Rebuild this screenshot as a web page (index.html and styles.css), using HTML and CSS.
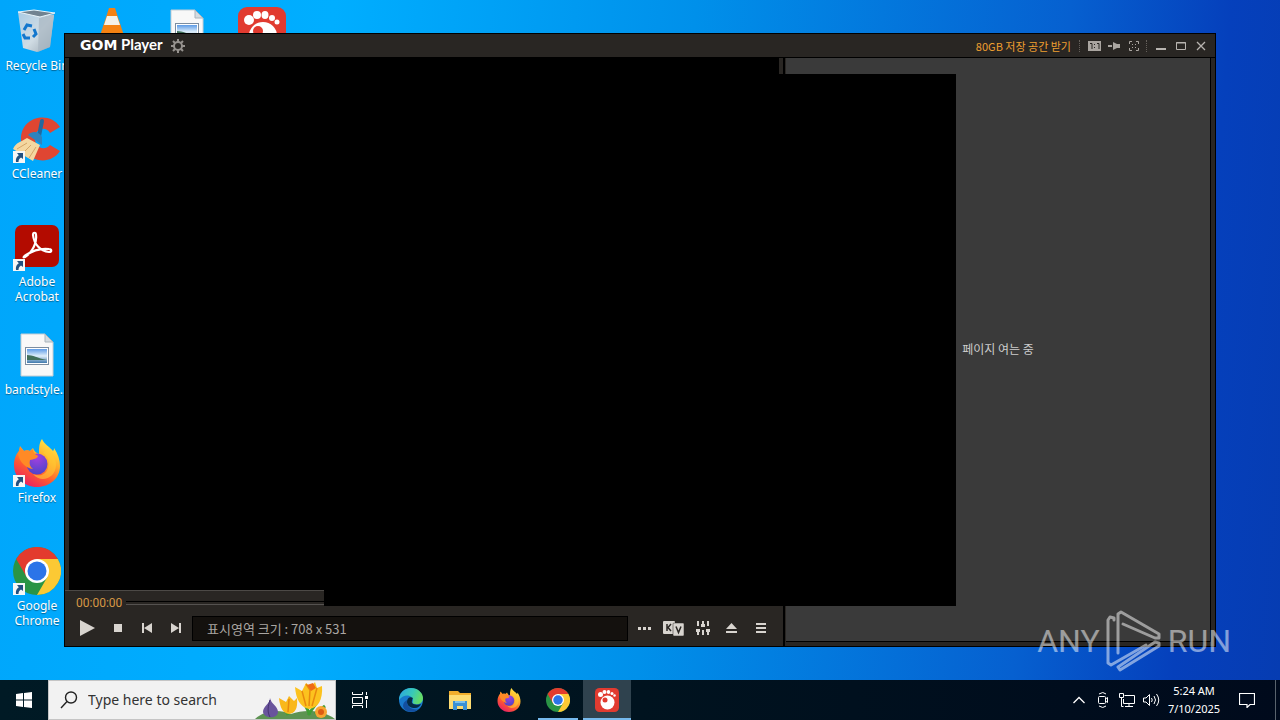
FILE: index.html
```html
<!doctype html>
<html lang="en">
<head>
    <meta charset="UTF-8">
    <meta name="viewport" content="width=device-width, initial-scale=1.0">
    <title>GOM Player</title>
    <link rel="stylesheet" href="styles.css">
</head>
<body>
<!-- shared icons -->
<svg class="sprite" aria-hidden="true">
    <defs>
        <linearGradient id="foxBody" x1="0.8" y1="0" x2="0.2" y2="1">
            <stop offset="0" stop-color="#fff14a"/>
            <stop offset="0.35" stop-color="#ffb02b"/>
            <stop offset="0.65" stop-color="#ff5a30"/>
            <stop offset="1" stop-color="#e3186c"/>
        </linearGradient>
        <radialGradient id="foxGlobe" cx="0.5" cy="0.2" r="0.8">
            <stop offset="0" stop-color="#a43fe0"/>
            <stop offset="1" stop-color="#4c45c8"/>
        </radialGradient>
        <linearGradient id="sky" x1="0" y1="0" x2="0" y2="1">
            <stop offset="0" stop-color="#5d9be6"/>
            <stop offset="0.5" stop-color="#e0effa"/>
            <stop offset="1" stop-color="#3f78ac"/>
        </linearGradient>
        <linearGradient id="bin" x1="0" y1="0" x2="1" y2="1">
            <stop offset="0" stop-color="#a9cbe4"/>
            <stop offset="0.55" stop-color="#d0dce4"/>
            <stop offset="1" stop-color="#98a5b0"/>
        </linearGradient>
        <linearGradient id="edgeTop" x1="0" y1="0" x2="1" y2="0.3">
            <stop offset="0" stop-color="#2aa4e4"/>
            <stop offset="0.6" stop-color="#38c9b8"/>
            <stop offset="1" stop-color="#64dc68"/>
        </linearGradient>
    </defs>
    <symbol id="i-chrome" viewBox="0 0 48 48">
        <circle cx="24" cy="24" r="24" fill="#2a9445"/>
        <path d="M24 24V12H44.800A24 24 0 0 1 24 48L34.400 30Z" fill="#fcc934"/>
        <path d="M13.600 30 3.200 12A24 24 0 0 1 44.800 12H24Z" fill="#e33b2e"/>
        <circle cx="24" cy="24" r="12" fill="#fff"/>
        <circle cx="24" cy="24" r="9.500" fill="#2b74e8"/>
    </symbol>
    <symbol id="i-firefox" viewBox="0 0 48 48">
        <path d="M29 0c2 5 8 8 11 12 1-1 1-2 1-3 4 6 6 12 6 18 0 12-10 21-23 21S1 38 1 26C1 20 3 15 6 12l1-5 4 5c2-1 4-1 6 0l3-3c1 3 3 5 6 6 0-6 0-11 3-15z" fill="url(#foxBody)"/>
        <circle cx="24" cy="25" r="10.500" fill="url(#foxGlobe)"/>
        <path d="M5 15l2-7 4 4c2-1 4-1 6 0l3-2c0 4 2 5 5 7-1 3-4 3-8 4-1 4 0 7 3 9-7-1-13-6-15-15z" fill="#ff8a26"/>
        <path d="M30 14c5 3 7 8 5 15-2 7-9 9-15 6 8 10 23 4 23-9 0-8-5-11-7-18z" fill="#ffcb34" opacity="0.600"/>
    </symbol>
    <symbol id="i-gom" viewBox="0 0 48 48">
        <rect width="48" height="48" rx="9" fill="#e13b30"/>
        <ellipse cx="11" cy="13" rx="5" ry="5" fill="#fff"/>
        <ellipse cx="19" cy="8" rx="4" ry="4" fill="#fff"/>
        <ellipse cx="27" cy="8" rx="3.500" ry="4" fill="#fff"/>
        <ellipse cx="34" cy="11" rx="3" ry="3" fill="#fff"/>
        <ellipse cx="39" cy="15" rx="2.500" ry="2.500" fill="#fff"/>
        <ellipse cx="25" cy="29" rx="14" ry="14" fill="#fff"/>
        <circle cx="20" cy="24" r="5" fill="#e13b30"/>
    </symbol>
    <symbol id="i-picture" viewBox="0 0 48 48">
        <path d="M8 3H32L40 11V45H8Z" fill="#f8f8f8" stroke="#c4cdd4"/>
        <path d="M32 3V11H40Z" fill="#d4dbe0" stroke="#aab4bc"/>
        <rect x="12.500" y="16.500" width="23" height="17" fill="#fff" stroke="#7c8da0"/>
        <rect x="14" y="18" width="20" height="14" fill="url(#sky)"/>
        <path d="M14 24c6 0 10 3 20 5H14z" fill="#42705a"/>
    </symbol>
    <symbol id="i-shortcut" viewBox="0 0 12 12">
        <rect width="12" height="12" fill="#f6f6f6"/>
        <path d="M4 2H10V8L8 6.500C6 8 5.500 9 5.500 11H3C2.500 8 3.500 6 5.800 4.300Z" fill="#23507f"/>
    </symbol>
</svg>

<main class="desktop">
    <nav class="shortcuts">
        <div class="column">
            <a href="#" class="shortcut">
                <span class="picture">
                    <svg viewBox="0 0 48 48">
                        <path d="M5 5 41 8 37 40 24 45 10 41Z" fill="url(#bin)"/>
                        <path d="M26 11 41 7 37 40 25 45Z" fill="#a7b5c1" opacity="0.700"/>
                        <path d="M5 5 21 3 42 6 27 10Z" fill="#718391" stroke="#e8f3f9"/>
                        <g fill="none" stroke="#1377cd" stroke-width="3">
                            <path d="M11 23l3-5 5 1"/>
                            <path d="M21 22l2 5-3 3"/>
                            <path d="M17 31h-5l-2-4"/>
                        </g>
                    </svg>
                </span>
                <span>Recycle Bin</span>
            </a>
            <a href="#" class="shortcut">
                <span class="picture">
                    <svg viewBox="0 0 48 48">
                        <path d="M47 12 37 18C33 11 23 13 22 22c-1 10 9 15 15 8l10 6C36 53 8 46 8 23 9 1 37-4 47 12z" fill="#df4632"/>
                        <path d="M29 6 26 21" stroke="#22699f" stroke-width="4" stroke-linecap="round"/>
                        <path d="M15 20c5-5 11-3 14 2v8z" fill="#2e83bd"/>
                        <path d="M14 23 27 30 20 46 0 34C3 27 8 27 14 23z" fill="#f4d7a0"/>
                        <path d="M4 34 14 28M10 38 18 30M16 43 23 32" stroke="#d4a667" fill="none"/>
                    </svg>
                    <svg class="arrow"><use href="#i-shortcut"/></svg>
                </span>
                <span>CCleaner</span>
            </a>
            <a href="#" class="shortcut">
                <span class="picture">
                    <svg viewBox="0 0 48 48">
                        <rect x="2" y="2" width="44" height="42" rx="7" fill="#b30b00"/>
                        <path d="M12 34c8-5 12-15 11-22 0-3-3-3-3 0 1 9 7 16 16 17 3 0 3-3 0-3-9-1-17 2-23 6-3 2-3 3-1 2z" fill="none" stroke="#fff" stroke-width="2.200"/>
                    </svg>
                    <svg class="arrow"><use href="#i-shortcut"/></svg>
                </span>
                <span>Adobe Acrobat</span>
            </a>
            <a href="#" class="shortcut">
                <span class="picture"><svg><use href="#i-picture"/></svg></span>
                <span>bandstyle...</span>
            </a>
            <a href="#" class="shortcut">
                <span class="picture">
                    <svg><use href="#i-firefox"/></svg>
                    <svg class="arrow"><use href="#i-shortcut"/></svg>
                </span>
                <span>Firefox</span>
            </a>
            <a href="#" class="shortcut">
                <span class="picture">
                    <svg><use href="#i-chrome"/></svg>
                    <svg class="arrow"><use href="#i-shortcut"/></svg>
                </span>
                <span>Google Chrome</span>
            </a>
        </div>
        <div class="column">
            <a href="#" class="shortcut" aria-label="VLC">
                <span class="picture">
                    <svg viewBox="0 0 48 48">
                        <path d="M21 1h6l14 43H7z" fill="#f58212"/>
                        <path d="M19 9h10l3 9H16zM13 26h22l3 9H10z" fill="#f4f1e8"/>
                    </svg>
                </span>
            </a>
        </div>
        <div class="column">
            <a href="#" class="shortcut" aria-label="Picture">
                <span class="picture"><svg><use href="#i-picture"/></svg></span>
            </a>
        </div>
        <div class="column">
            <a href="#" class="shortcut" aria-label="GOM Player">
                <span class="picture"><svg><use href="#i-gom"/></svg></span>
            </a>
        </div>
    </nav>

    <section class="player">
        <header class="titlebar">
            <h1><span class="gom">GOM</span> Player</h1>
            <button type="button" aria-label="Settings">
                <svg width="14" height="14" viewBox="0 0 14 14" fill="none" stroke="#96928e">
                    <circle cx="7" cy="7" r="4" stroke-width="2"/>
                    <path d="M7 0v3M7 11v3M0 7h3M11 7h3M2 2l2 2M10 10l2 2M2 12l2-2M10 4l2-2" stroke-width="2"/>
                </svg>
            </button>
            <a href="#" class="promo">80GB 저장 공간 받기</a>
            <div class="group">
                <button type="button" aria-label="Original size">
                    <svg width="13" height="10" viewBox="0 0 13 10">
                        <rect width="13" height="10" fill="#aaa5a0"/>
                        <path d="M2 2.500h2V8M9 2.500h2V8M6.500 3v1M6.500 6v1" stroke="#292623" fill="none"/>
                    </svg>
                </button>
                <button type="button" aria-label="Always on top">
                    <svg width="13" height="10" viewBox="0 0 13 10" fill="#aaa5a0">
                        <path d="M0 4h4v2H0zM5 1l4 2h3v4H9L5 9z"/>
                    </svg>
                </button>
                <button type="button" aria-label="Full screen">
                    <svg width="10" height="10" viewBox="0 0 10 10" fill="none" stroke="#aaa5a0">
                        <path d="M.5 3V.5H3M7 .5h2.500V3M9.500 7v2.500H7M3 9.500H.5V7M3 3l1 1M7 3 6 4M3 7l1-1M7 7 6 6"/>
                    </svg>
                </button>
            </div>
            <div class="group">
                <button type="button" aria-label="Minimize">
                    <svg width="10" height="10" viewBox="0 0 10 10"><path d="M0 8h10" stroke="#b8b4b0" stroke-width="2"/></svg>
                </button>
                <button type="button" aria-label="Maximize">
                    <svg width="10" height="10" viewBox="0 0 10 10" fill="none" stroke="#b8b4b0"><path d="M.5 1.500h9v7h-9zM0 2h10"/></svg>
                </button>
                <button type="button" aria-label="Close">
                    <svg width="10" height="10" viewBox="0 0 10 10" stroke="#b8b4b0" stroke-width="1.300"><path d="M1 1l8 8M9 1 1 9"/></svg>
                </button>
            </div>
        </header>

        <div class="content">
            <div class="left">
                <div class="video"></div>
                <div class="seek">
                    <time>00:00:00</time>
                    <input type="range" min="0" max="100" value="0" aria-label="Position">
                </div>
                <div class="controls">
                    <button type="button" class="play" aria-label="Play">
                        <svg width="15" height="16" viewBox="0 0 15 16"><path d="M0 0 15 8 0 16Z"/></svg>
                    </button>
                    <button type="button" aria-label="Stop">
                        <svg width="8" height="8" viewBox="0 0 8 8"><path d="M0 0h8v8H0z"/></svg>
                    </button>
                    <button type="button" aria-label="Previous">
                        <svg width="10" height="10" viewBox="0 0 10 10"><path d="M0 0h2v10H0zM10 0v10L2 5z"/></svg>
                    </button>
                    <button type="button" aria-label="Next">
                        <svg width="10" height="10" viewBox="0 0 10 10"><path d="M8 0h2v10H8zM0 0v10l8-5z"/></svg>
                    </button>
                    <output>표시영역 크기 : 708 x 531</output>
                    <div class="extras">
                        <button type="button" aria-label="More">
                            <svg width="13" height="3" viewBox="0 0 13 3"><path d="M0 0h3v3H0zM5 0h3v3H5zM10 0h3v3h-3z"/></svg>
                        </button>
                        <button type="button" aria-label="Subtitles">
                            <svg width="21" height="16" viewBox="0 0 21 16">
                                <rect y="1" width="12" height="13" rx="1"/>
                                <rect x="10" y="3" width="11" height="13" rx="1" stroke="#292623" stroke-width=".5"/>
                                <path d="M4 4v7M8 4 5 7.500 8 11M13 6.500l2.500 6L18 6.500" fill="none" stroke="#292623" stroke-width="1.500"/>
                            </svg>
                        </button>
                        <button type="button" aria-label="Control panel">
                            <svg width="14" height="14" viewBox="0 0 14 14">
                                <path d="M1 0h2v5H1zM0 8h4v3H3v3H1v-3H0zM6 0h2v3h1v3H5V3h1zM6 9h2v5H6zM11 0h2v5h-2zM10 8h4v3h-1v3h-2v-3h-1z"/>
                            </svg>
                        </button>
                        <button type="button" aria-label="Open">
                            <svg width="11" height="10" viewBox="0 0 11 10"><path d="M5.500 0 11 6H0zM0 8h11v2H0z"/></svg>
                        </button>
                        <button type="button" aria-label="Playlist">
                            <svg width="10" height="10" viewBox="0 0 10 10"><path d="M0 0h10v2H0zM0 4h10v2H0zM0 8h10v2H0z"/></svg>
                        </button>
                    </div>
                </div>
            </div>
            <aside class="side">페이지 여는 중</aside>
        </div>
        <div class="surface"></div>
    </section>

    <div class="watermark">
        <span>ANY</span>
        <svg width="56" height="62" viewBox="0 0 56 62" fill="none" stroke="#fff" stroke-width="3" stroke-linejoin="round" stroke-linecap="round">
            <path d="M8 10V8L4 7 2 10V53L5 55 40 35"/>
            <path d="M12 43V4L15 2 53 24V28L49 28 17 14"/>
            <path d="M12 57 14 60 53 36V33L49 32 12 57"/>
        </svg>
        <span>RUN</span>
    </div>
</main>

<footer class="taskbar">
    <button type="button" class="task" aria-label="Start">
        <svg width="16" height="16" viewBox="0 0 16 16" fill="#fff"><path d="M0 2 7 1v6.500H0zM8 1l8-1v7.500H8zM0 8.500h7V15l-7-1zM8 8.500h8V16l-8-1z"/></svg>
    </button>
    <label class="search">
        <svg width="18" height="18" viewBox="0 0 18 18" fill="none" stroke="#222" stroke-width="1.400"><circle cx="11" cy="6.500" r="5.500"/><path d="M7 10.500 1 17"/></svg>
        <input type="text" placeholder="Type here to search" aria-label="Search">
        <svg class="flowers" width="80" height="38" viewBox="0 0 80 38">
            <path d="M0 38c10-9 24-10 36-5 14-5 32-4 44 5z" fill="#5d9352"/>
            <path d="M33 34 28 21M55 34 47 17M53 34l10-14M60 33l10-8" stroke="#3f9d35" stroke-width="3" fill="none"/>
            <path d="M15 17c1 6 8 8 8 14 0 7-14 7-15 0 0-6 7-8 7-14z" fill="#69549c"/>
            <path d="M15 19c-2 6-3 12 0 17" stroke="#453273" fill="none"/>
            <path d="M24 17l7 4 3-6 5 5 3-3c1 11-2 15-8 16-6-1-9-6-10-16z" fill="#f9b81b"/>
            <path d="M40 6l7 4 4-8 5 4 4-5 2 6 5-2c1 14-4 22-13 23-9-2-13-10-14-22z" fill="#fcc21e"/>
            <path d="M51 3l4 6-1 16M47 10l4 15M62 7l-5 18M34 18l-1 13" stroke="#e8890e" stroke-width="1.500" fill="none"/>
            <path d="M52 4l6-2 3 5-5 3z" fill="#ef6b14"/>
            <circle cx="66" cy="31" r="6" fill="#f8a531"/>
            <circle cx="66" cy="31" r="3" fill="#dd5c14"/>
        </svg>
    </label>
    <button type="button" class="task" aria-label="Task View">
        <svg width="17" height="16" viewBox="0 0 17 16" fill="none" stroke="#fff"><path d="M.5 0v2.500h10V0M.5 5.500h10v6H.5zM.5 16v-2.500h10V16M14.500 0v3M14.500 8v8"/><path d="M13 4h3v3h-3z" fill="#fff" stroke="none"/></svg>
    </button>
    <div class="apps">
        <button type="button" class="task" aria-label="Edge">
            <svg width="24" height="24" viewBox="0 0 24 24">
                <circle cx="12" cy="12" r="12" fill="#1879cc"/>
                <path d="M0 12C0 5 5 0 12 0s12 5 12 10c0 5-4 7-8 6-2 0-3-1-2-3 1-5-8-9-14-1z" fill="url(#edgeTop)"/>
                <path d="M8 14c0-4 3-6 6-4-1 1-1 3-1 3-1 2 2 5 9 3-1 2-3 4-6 4-4 0-8-2-8-6z" fill="#052a44"/>
                <path d="M8 12c-1 7 6 11 12 9-6 5-15 3-16-3 0-3 2-5 4-6z" fill="#134f9f"/>
            </svg>
        </button>
        <button type="button" class="task" aria-label="File Explorer">
            <svg width="22" height="20" viewBox="0 0 22 20">
                <path d="M0 1h9l2 2h11v16H0z" fill="#f1ae2c"/>
                <path d="M0 5h22v14H0z" fill="#fddc72"/>
                <path d="M4 11h14v9h-4v-4H8v4H4z" fill="#3b91d4"/>
                <path d="M6 11h10v2H6z" fill="#7dc2ed"/>
            </svg>
        </button>
        <button type="button" class="task" aria-label="Firefox"><svg width="24" height="24"><use href="#i-firefox"/></svg></button>
        <button type="button" class="task running" aria-label="Chrome"><svg width="24" height="24"><use href="#i-chrome"/></svg></button>
        <button type="button" class="task active" aria-label="GOM Player"><svg width="24" height="24"><use href="#i-gom"/></svg></button>
    </div>
    <div class="tray">
        <button type="button" aria-label="Show hidden icons">
            <svg width="12" height="8" viewBox="0 0 12 8" fill="none" stroke="#fff" stroke-width="1.300"><path d="M.5 7 6 1.500 11.500 7"/></svg>
        </button>
        <button type="button" aria-label="Meet Now">
            <svg width="12" height="16" viewBox="0 0 12 16" fill="none" stroke="#fff"><rect x="1.500" y="4.500" width="7" height="7" rx="1"/><path d="M8.500 7l2-1.500v5l-2-1.500M2 2q4-3 7 0M2 14q4 3 7 0"/></svg>
        </button>
        <button type="button" aria-label="Network">
            <svg width="16" height="14" viewBox="0 0 16 14" fill="none" stroke="#fff"><path d="M5.500 2.500h10v8h-11V6M10 10.500v3M6 13.500h8M.5.5h4v4h-4zM2.500 4.500v9h2"/></svg>
        </button>
        <button type="button" aria-label="Volume">
            <svg width="17" height="14" viewBox="0 0 17 14" fill="none" stroke="#fff"><path d="M.5 5h2.500L6.500 1.500v11L3 9H.5zM8.500 5q1.500 2 0 4M11 3q3 4 0 8M13.500 1q4.500 6 0 12"/></svg>
        </button>
    </div>
    <time class="clock">5:24 AM<br>7/10/2025</time>
    <button type="button" class="notes" aria-label="Notifications">
        <svg width="16" height="16" viewBox="0 0 16 16" fill="none" stroke="#fff" stroke-width="1.200"><path d="M.5 1.500h15v11H11L8 15.500V12.500H.5z"/></svg>
    </button>
    <button type="button" class="peek" aria-label="Show desktop"></button>
</footer>
</body>
</html>
```
FILE: styles.css
```css
* {
    box-sizing: border-box;
}

body {
    margin: 0;
    height: 100vh;
    display: grid;
    grid-template-rows: 1fr 40px;
    overflow: hidden;
    font-family: "Noto Sans", "Noto Sans CJK KR", sans-serif;
    font-size: 12px;
    color: #fff;
}

button {
    display: flex;
    align-items: center;
    justify-content: center;
    padding: 0;
    border: 0;
    background: none;
    color: inherit;
}

.sprite {
    position: absolute;
    width: 0;
    height: 0;
}

/* desktop */
.desktop {
    position: relative;
    min-height: 0;
    background: linear-gradient(95deg, #00a6fb 0%, #00aeff 25%, #0090ea 52%, #0660d0 80%, #0540bc 92%, #063cb2 100%);
}

.shortcuts {
    display: flex;
    height: 100%;
}

.column {
    width: 75px;
    padding-top: 7px;
}

.shortcut {
    display: flex;
    flex-direction: column;
    align-items: center;
    gap: 3px;
    height: 108px;
    padding: 0 3px 0 2px;
    line-height: 15px;
    text-align: center;
    color: #fff;
    text-decoration: none;
    text-shadow: 0 1px 1px rgba(0, 0, 0, 0.4);
}

.picture {
    position: relative;
    flex: none;
    width: 48px;
    height: 48px;
}

.picture svg {
    width: 48px;
    height: 48px;
}

.picture .arrow {
    position: absolute;
    left: 0;
    bottom: 0;
    width: 12px;
    height: 12px;
}

/* player window */
.player {
    position: absolute;
    inset: 33px 64px 33px 64px;
    display: flex;
    flex-direction: column;
    border: 1px solid #000;
    background: #292623;
}

.titlebar {
    display: flex;
    align-items: center;
    height: 24px;
    padding: 0 2px 0 15px;
    border-bottom: 1px solid #000;
}

.titlebar h1 {
    margin: 0 8px 2px 0;
    font: bold 15px/20px Lato, sans-serif;
}

.titlebar .gom {
    font-family: "DejaVu Sans", sans-serif;
    font-size: 14px;
}

.promo {
    margin-left: auto;
    margin-right: 8px;
    font: 11px/20px "Noto Sans CJK KR", sans-serif;
    color: #f0a030;
    text-decoration: none;
}

.group {
    display: flex;
    border-left: 1px dotted #65605b;
    padding: 0 2px 0 4px;
}

.group button {
    width: 20px;
    height: 12px;
}

.content {
    flex: 1;
    display: flex;
    min-height: 0;
}

.left {
    flex: 1;
    display: flex;
    flex-direction: column;
    border-right: 2px solid #000;
}

.video {
    flex: 1;
    margin: 0 4px;
    background: #000;
}

.seek {
    display: flex;
    align-items: center;
    gap: 4px;
    height: 24px;
    padding: 0 11px;
    border-top: 1px solid #4c4946;
}

.seek time {
    font: 12px/16px Roboto, sans-serif;
    color: #d69745;
}

.seek input {
    flex: 1;
    height: 4px;
    margin: 0;
    appearance: none;
    border-top: 1px solid #000;
    border-bottom: 1px solid #555250;
    background: #292623;
}

.seek input::-webkit-slider-thumb {
    appearance: none;
    width: 0;
    height: 0;
}

.controls {
    display: flex;
    align-items: center;
    height: 32px;
    padding: 0 8px 4px 6px;
}

.controls button {
    width: 29px;
    height: 24px;
}

.controls .play {
    width: 32px;
}

.controls svg {
    fill: #d8d4cf;
}

.controls output {
    flex: 1;
    height: 25px;
    margin: 0 2px;
    padding-left: 14px;
    border: 1px solid #000;
    background: #14110e;
    font: 13px/23px "Noto Sans CJK KR", sans-serif;
    color: #aaa6a2;
}

.extras {
    display: flex;
}

.side {
    display: flex;
    align-items: center;
    justify-content: center;
    width: 425px;
    margin: 0 4px 4px 1px;
    padding-bottom: 2px;
    border: solid #000;
    border-width: 0 1px 1px 0;
    background: #3a3a3a;
    font-family: "Noto Sans CJK KR", sans-serif;
    color: #ccc;
}

/* video surface drawn over both panes */
.surface {
    position: absolute;
    inset: 40px 259px;
    background: #000;
}

.watermark {
    position: absolute;
    right: 49px;
    bottom: 8px;
    display: flex;
    align-items: center;
    gap: 6px;
    opacity: 0.5;
    font: 32px/40px Roboto, sans-serif;
}

/* taskbar */
.taskbar {
    display: flex;
    align-items: stretch;
    background: linear-gradient(90deg, #001a25, #00131f 50%, #000a1c);
}

.task {
    width: 48px;
}

.search {
    display: flex;
    align-items: center;
    width: 288px;
    padding-left: 11px;
    border: 1px solid #c5c5c5;
    background: #f2f2f2;
}

.search input {
    flex: 1;
    min-width: 0;
    padding: 0 0 0 10px;
    border: 0;
    outline: 0;
    background: none;
    font: 14px/20px "Noto Sans", sans-serif;
}

.search input::placeholder {
    color: #333;
}

.apps {
    display: flex;
    gap: 1px;
    margin-left: 3px;
}

.running {
    background: linear-gradient(#76b9ed, #76b9ed) bottom / 40px 2px no-repeat;
}

.active {
    background: linear-gradient(#76b9ed, #76b9ed) bottom / 48px 2px no-repeat #2f424e;
}

.tray {
    display: flex;
    margin-left: auto;
}

.tray button {
    width: 24px;
}

.clock {
    width: 62px;
    padding-top: 2px;
    font-size: 11px;
    line-height: 18px;
    text-align: center;
}

.notes {
    width: 44px;
}

.peek {
    width: 5px;
    margin-left: 6px;
    border-left: 1px solid #59636d;
}
```
